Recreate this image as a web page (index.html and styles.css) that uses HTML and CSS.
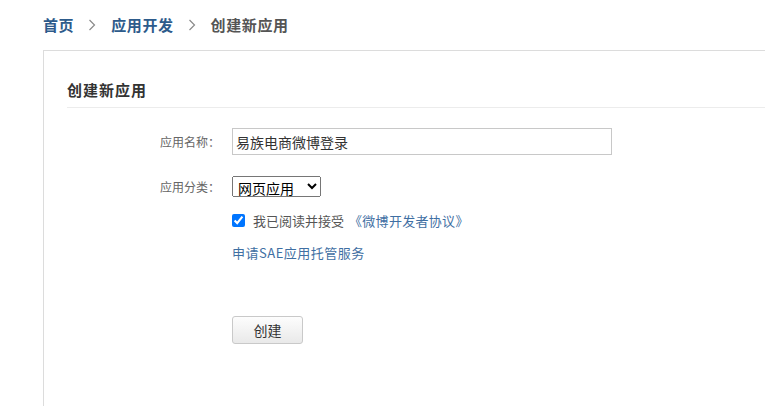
FILE: index.html
```html
<!DOCTYPE html>
<html lang="zh-CN">
<head>
    <meta charset="UTF-8">
    <title>创建新应用</title>
    <link rel="stylesheet" href="styles.css">
</head>
<body>
    <div class="crumbs">
        <a href="#">首页</a>
        <svg class="sep" width="8" height="12" viewBox="0 0 8 12"><path d="M1.5 1 L6.5 6 L1.5 11" fill="none" stroke="#8a8a8a" stroke-width="1.2"/></svg>
        <a href="#">应用开发</a>
        <svg class="sep" width="8" height="12" viewBox="0 0 8 12"><path d="M1.5 1 L6.5 6 L1.5 11" fill="none" stroke="#8a8a8a" stroke-width="1.2"/></svg>
        <span class="current">创建新应用</span>
    </div>

    <div class="panel">
        <h2 class="panel-title">创建新应用</h2>
        <div class="form">
            <div class="row row-name">
                <label class="label">应用名称：</label>
                <input type="text" class="text-input" value="易族电商微博登录">
            </div>
            <div class="row row-type">
                <label class="label">应用分类：</label>
                <select class="select">
                    <option>网页应用</option>
                    <option>移动应用</option>
                </select>
            </div>
            <div class="row row-agree">
                <input type="checkbox" class="check" checked>
                <span class="agree-text">我已阅读并接受</span>
                <a href="#" class="link">《微博开发者协议》</a>
            </div>
            <div class="row row-sae">
                <a href="#" class="link sae">申请SAE应用托管服务</a>
            </div>
            <div class="row row-submit">
                <button class="btn">创建</button>
            </div>
        </div>
    </div>
</body>
</html>
```

FILE: styles.css
```css
body {
    margin: 0;
    font-family: 'Noto Sans CJK SC', 'Liberation Sans', sans-serif;
    background-color: #fff;
    overflow: hidden;
    height: 406px;
}

.crumbs {
    padding: 13px 0 0 43px;
    height: 37px;
    box-sizing: border-box;
    font-size: 15px;
    line-height: 22px;
    font-weight: bold;
    letter-spacing: 0.6px;
    display: flex;
    align-items: center;
}

.crumbs a {
    color: #2d5b8b;
    text-decoration: none;
}

.crumbs .sep {
    margin: 0 15px 0 14px;
}

.crumbs .current {
    color: #555;
}

.panel {
    margin: 13px 0 0 43px;
    width: 800px;
    height: 400px;
    border: 1px solid #dcdcdc;
    border-right: none;
    padding: 28px 0 0 23px;
    box-sizing: border-box;
}

.panel-title {
    margin: 0;
    font-size: 15px;
    line-height: 22px;
    font-weight: bold;
    letter-spacing: 1px;
    color: #333;
    padding-bottom: 6px;
    border-bottom: 1px solid #ececec;
}

.form {
    padding-top: 20px;
}

.row {
    display: flex;
    align-items: center;
    padding-left: 165px;
}

.row-name,
.row-type {
    padding-left: 0;
}

.label {
    width: 153px;
    margin-right: 12px;
    text-align: right;
    font-size: 12px;
    color: #666;
}

.text-input {
    width: 380px;
    height: 27px;
    box-sizing: border-box;
    border: 1px solid #c8c8c8;
    padding: 0 3px;
    font-family: inherit;
    font-size: 14px;
    color: #333;
    margin: 0;
}

.row-type {
    margin-top: 21px;
}

.select {
    width: 89px;
    height: 21px;
    font-family: inherit;
    font-size: 14px;
    color: #000;
    margin: 0;
    padding: 0 1px;
}

.row-agree {
    margin-top: 13px;
    height: 20px;
    font-size: 13px;
}

.check {
    width: 13px;
    height: 13px;
    margin: 0 8px 0 0;
}

.agree-text {
    color: #555;
}

.link {
    color: #3f6fa3;
    text-decoration: none;
    font-size: 13px;
}

.row-agree .link {
    margin-left: 5px;
    letter-spacing: 0.3px;
}

.sae {
    letter-spacing: 0.5px;
}

.row-sae {
    margin-top: 12px;
    height: 20px;
}

.row-submit {
    margin-top: 54px;
}

.btn {
    width: 71px;
    height: 28px;
    border: 1px solid #c9c9c9;
    border-radius: 3px;
    background: linear-gradient(#fdfdfd, #e9e9e9);
    font-family: inherit;
    font-size: 14px;
    color: #333;
    cursor: pointer;
}
```
